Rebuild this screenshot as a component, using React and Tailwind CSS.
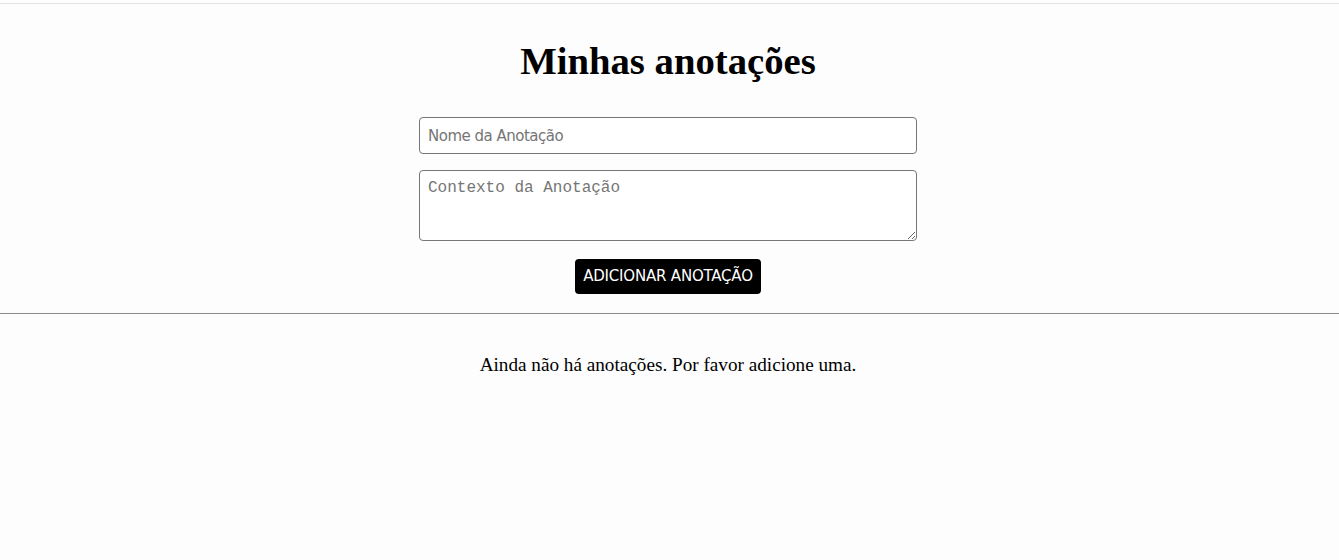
export default function App() {
    return (
        <div className="min-h-screen bg-[#fdfdfd] font-['Liberation_Serif',serif] text-black">
            <div className="pt-[3px]">
                <div className="h-px bg-[#e3e3e3]" />
            </div>

            <div className="pr-[3px]">
                <h1 className="mt-[35px] text-center text-[38.7px] leading-[44px] font-bold">
                    Minhas anotações
                </h1>

                <form className="mt-[34px] flex flex-col items-center" onSubmit={(e) => e.preventDefault()}>
                    <input
                        type="text"
                        autoFocus
                        placeholder="Nome da Anotação"
                        className="w-[498px] h-[37px] px-[8px] rounded-[4px] border border-[#767676] bg-white text-[15px] tracking-[-0.5px] font-['DejaVu_Sans',sans-serif] placeholder:text-[#757575] outline-none"
                    />
                    <textarea
                        placeholder="Contexto da Anotação"
                        className="mt-[16px] w-[498px] h-[71px] px-[8px] py-[7px] rounded-[4px] border border-[#767676] bg-white text-[16px] leading-[20px] font-['Liberation_Mono',monospace] placeholder:text-[#757575] outline-none"
                    />
                    <button
                        type="submit"
                        className="mt-[18px] h-[35px] px-[8px] rounded-[4px] bg-black text-white text-[15px] tracking-[-0.2px] font-['DejaVu_Sans',sans-serif]"
                    >
                        ADICIONAR ANOTAÇÃO
                    </button>
                </form>
            </div>

            <hr className="mt-[19px] border-0 h-px bg-[#8a8a8a]" />

            <p className="mt-[37px] pr-[3px] text-center text-[19.2px]">
                Ainda não há anotações. Por favor adicione uma.
            </p>
        </div>
    )
}
